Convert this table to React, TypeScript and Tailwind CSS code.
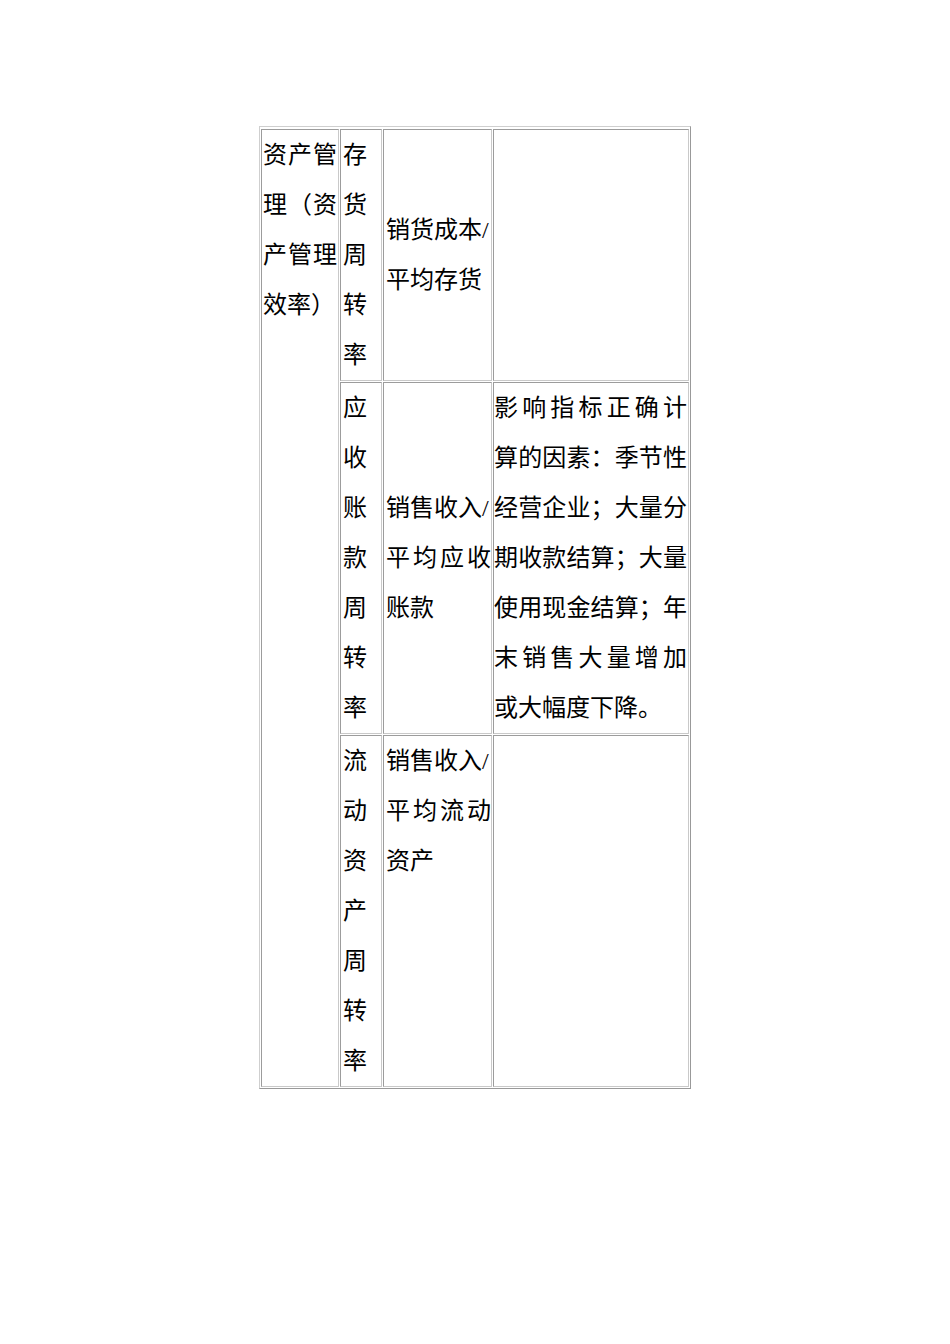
const font = {
  fontFamily: '"Liberation Serif", "Noto Sans CJK SC", serif',
};

// one line of text; justified lines spread their characters across the cell
function Line({ text, justify = false }: { text: string; justify?: boolean }) {
  if (!justify) return <div className="h-[50px] leading-[50px] whitespace-nowrap">{text}</div>;
  return (
    <div className="h-[50px] leading-[50px] flex justify-between whitespace-nowrap">
      {Array.from(text).map((c, i) => (
        <span key={i}>{c}</span>
      ))}
    </div>
  );
}

function Lines({ lines, justifyAll = false }: { lines: string[]; justifyAll?: boolean }) {
  return (
    <>
      {lines.map((l, i) => (
        <Line key={i} text={l} justify={justifyAll || i < lines.length - 1} />
      ))}
    </>
  );
}

const cell =
  "border border-t-[#9c9c9c] border-l-[#9c9c9c] border-b-[#c9c9c9] border-r-[#c9c9c9] bg-white";

export default function App() {
  return (
    <main className="min-h-screen bg-white text-black pt-[126px]" style={font}>
      <div className="mx-auto w-[432px] border border-t-[#cfcfcf] border-l-[#cfcfcf] border-b-[#999999] border-r-[#999999] px-px pt-[2px] pb-px">
        <div className="grid grid-cols-[78px_42px_109px_196px] gap-px text-[24px]">
          {/* 类别 */}
          <div className={`${cell} row-span-3 px-px`}>
            <Lines lines={["资产管", "理（资", "产管理", "效率）"]} />
          </div>

          {/* 存货周转率 */}
          <div className={`${cell} pl-[2px]`}>
            <Lines lines={["存", "货", "周", "转", "率"]} />
          </div>
          <div className={`${cell} pl-[2px] flex flex-col justify-center`}>
            <Line text="销货成本/" />
            <Line text="平均存货" />
          </div>
          <div className={cell}></div>

          {/* 应收账款周转率 */}
          <div className={`${cell} pl-[2px]`}>
            <Lines lines={["应", "收", "账", "款", "周", "转", "率"]} />
          </div>
          <div className={`${cell} pl-[2px] flex flex-col justify-center`}>
            <Line text="销售收入/" />
            <Line text="平均应收" justify />
            <Line text="账款" />
          </div>
          <div className={`${cell} pr-px`}>
            <Lines
              lines={[
                "影响指标正确计",
                "算的因素：季节性",
                "经营企业；大量分",
                "期收款结算；大量",
                "使用现金结算；年",
                "末销售大量增加",
                "或大幅度下降。",
              ]}
            />
          </div>

          {/* 流动资产周转率 */}
          <div className={`${cell} pl-[2px]`}>
            <Lines lines={["流", "动", "资", "产", "周", "转", "率"]} />
          </div>
          <div className={`${cell} pl-[2px]`}>
            <Line text="销售收入/" />
            <Line text="平均流动" justify />
            <Line text="资产" />
          </div>
          <div className={cell}></div>
        </div>
      </div>
    </main>
  );
}
